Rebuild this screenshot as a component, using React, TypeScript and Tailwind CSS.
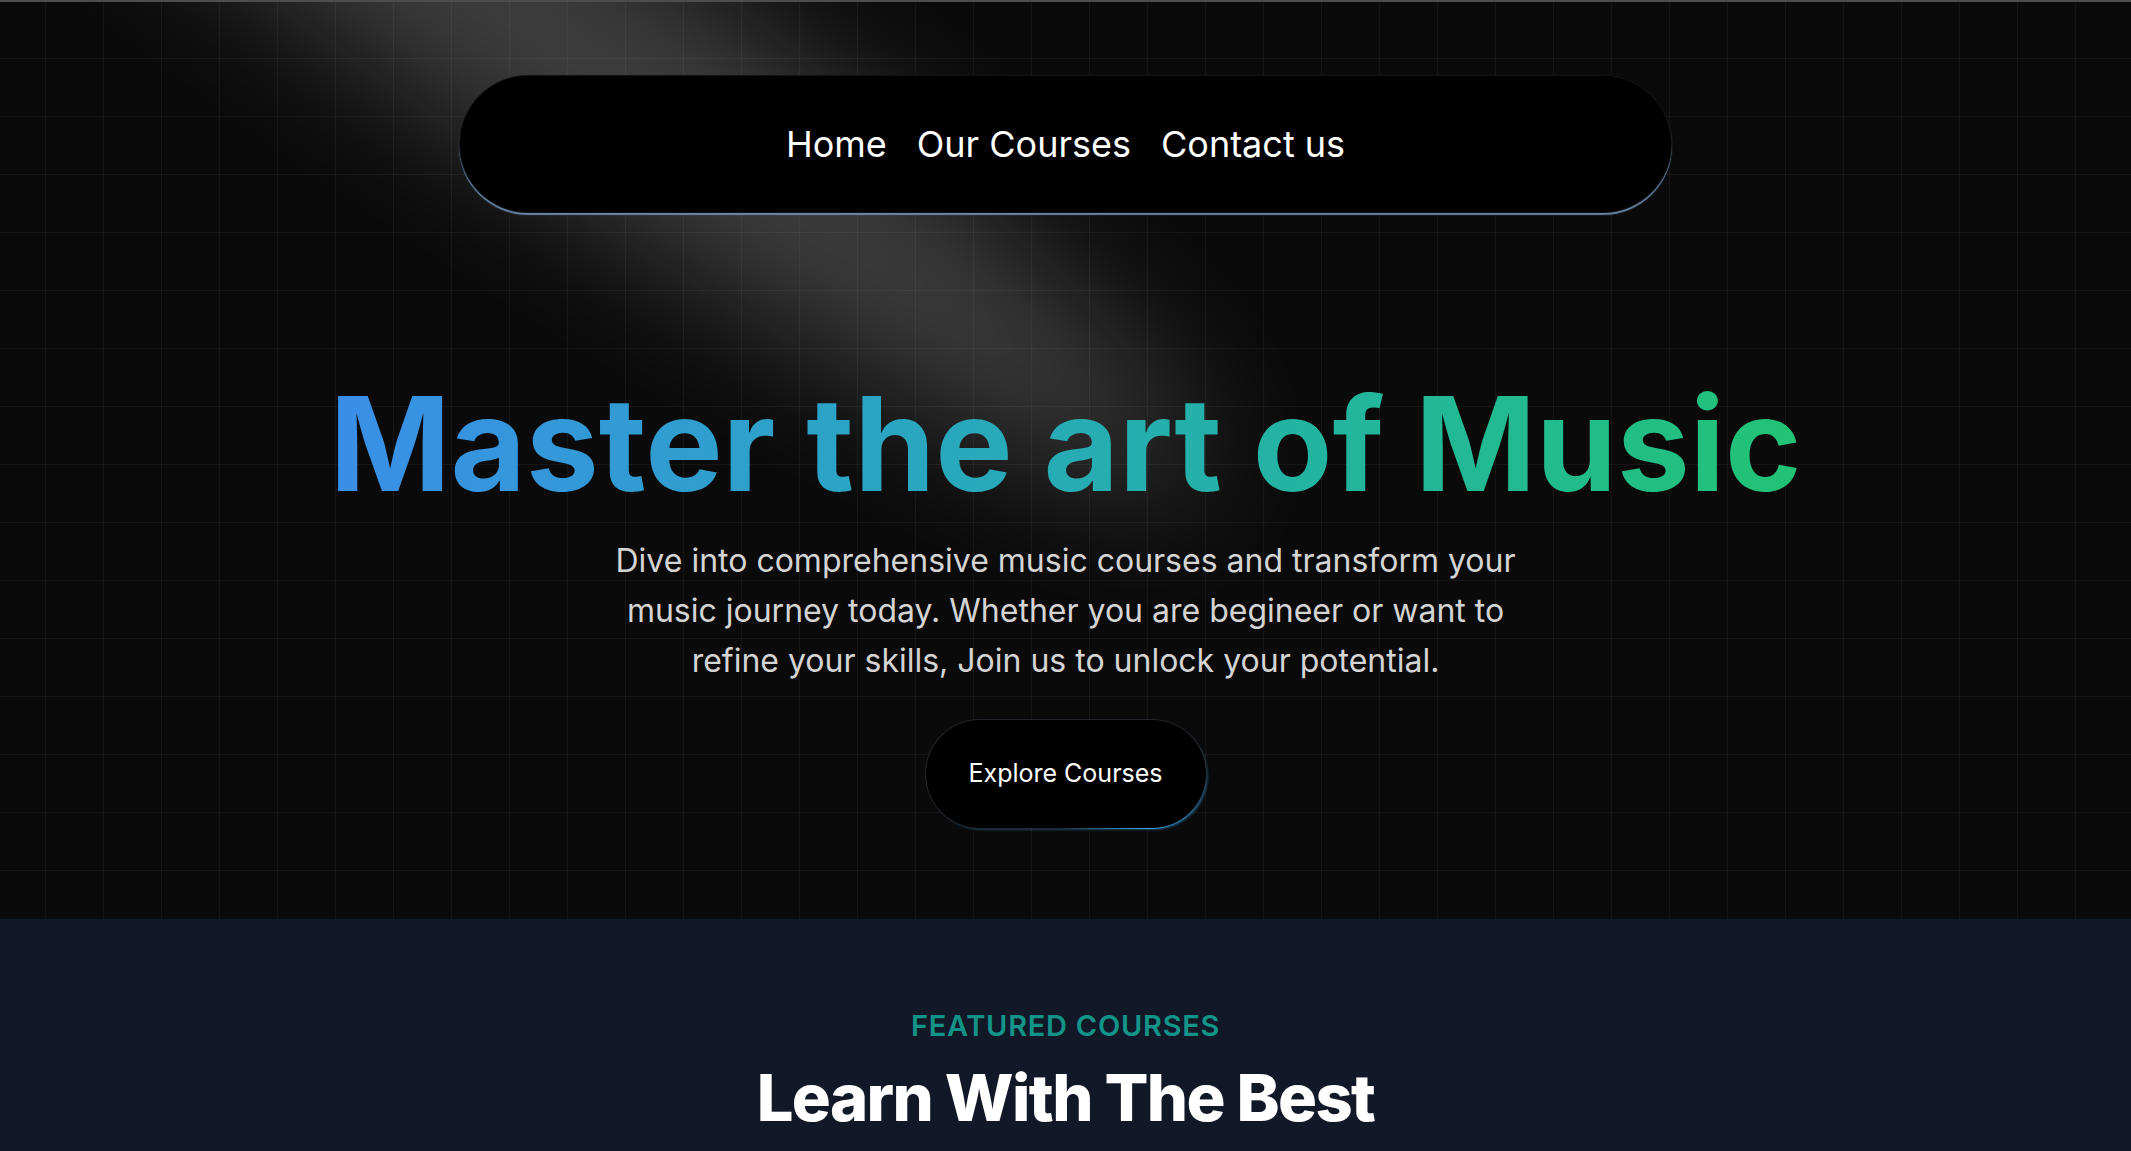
import React from "react";

// blurred ellipse "spotlight" beam drawn over the grid
function Spotlight() {
  return (
    <svg
      className="pointer-events-none absolute left-[-400px] top-[-675px] z-[1] h-[1310px] w-[1745px]"
      viewBox="0 0 3787 2842"
      fill="none"
    >
      <g filter="url(#spot-blur)">
        <ellipse
          cx="1924.71"
          cy="273.501"
          rx="1924.71"
          ry="273.501"
          transform="matrix(-0.822377 -0.568943 -0.568943 0.822377 3631.88 2291.09)"
          fill="white"
          fillOpacity="0.21"
        />
      </g>
      <defs>
        <filter
          id="spot-blur"
          x="0.860352"
          y="0.838989"
          width="3785.16"
          height="2840.26"
          filterUnits="userSpaceOnUse"
          colorInterpolationFilters="sRGB"
        >
          <feFlood floodOpacity="0" result="BackgroundImageFix" />
          <feBlend mode="normal" in="SourceGraphic" in2="BackgroundImageFix" result="shape" />
          <feGaussianBlur stdDeviation="151" result="blurred" />
        </filter>
      </defs>
    </svg>
  );
}

const links = ["Home", "Our Courses", "Contact us"];

export default function App() {
  return (
    <div className="min-h-screen bg-[#111827] font-['Inter',sans-serif] antialiased">
      <section className="relative h-[919px] overflow-hidden bg-[#0a0a0a]">
        {/* faint grid */}
        <div className="absolute inset-0 bg-[linear-gradient(to_right,rgba(255,255,255,0.045)_1px,transparent_1px),linear-gradient(to_bottom,rgba(255,255,255,0.045)_1px,transparent_1px)] bg-size-[58px_58px] bg-position-[45px_0px]" />
        <Spotlight />
        <div className="absolute inset-x-0 top-0 z-20 h-[2px] bg-[#4d4d4d]" />

        <div className="relative z-10 flex flex-col items-center pt-[75px]">
          <nav className="flex h-[138px] w-[1213px] items-center justify-center gap-[30px] rounded-full border border-white/[0.07] bg-black text-[36px] text-white shadow-[0_2px_1px_rgba(110,145,185,0.9)]">
            {links.map((l) => (
              <a key={l} href="#" className="leading-none">
                {l}
              </a>
            ))}
          </nav>

          <h1 className="mt-[166px] whitespace-nowrap bg-gradient-to-r from-[#3a8ee8] to-[#22c374] bg-clip-text text-[130px] font-bold leading-none text-transparent">
            Master the art of Music
          </h1>

          <p className="mt-[27px] max-w-[940px] text-center text-[32px] leading-[50px] text-[#d4d4d4]">
            Dive into comprehensive music courses and transform your music journey today. Whether you are begineer or
            want to refine your skills, Join us to unlock your potential.
          </p>

          <div className="mt-[33px] rounded-full bg-[radial-gradient(32%_65%_at_80%_100%,#3aa8ea_0%,#2a7fb5_40%,rgba(120,140,165,0.22)_100%)] p-px shadow-[2px_2px_3px_-2px_rgba(58,168,234,0.7)]">
            <button className="h-[108px] w-[280px] rounded-full bg-black text-[25px] text-white">
              Explore Courses
            </button>
          </div>
        </div>
      </section>

      <section className="flex flex-col items-center pb-24 pt-[86px]">
        <p className="text-[29px] font-semibold uppercase leading-[42px] tracking-wide text-[#139488]">
          Featured Courses
        </p>
        <h2 className="mt-4 text-[65px] font-extrabold leading-[70px] tracking-tight text-white">
          Learn With The Best
        </h2>
      </section>
    </div>
  );
}
